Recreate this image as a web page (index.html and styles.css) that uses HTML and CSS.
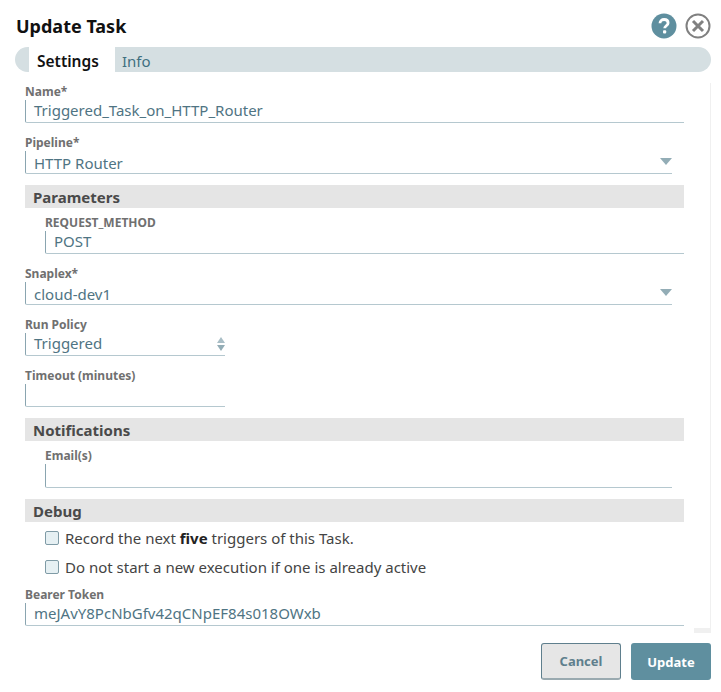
FILE: index.html
```html
<!DOCTYPE html>
<html lang="en">
<head>
  <meta charset="UTF-8" />
  <title>Update Task</title>
  <link rel="stylesheet" href="styles.css">
</head>
<body>
  <div class="dialog">
    <div class="header">
      <h1>Update Task</h1>
      <div class="header-icons">
        <svg class="icon" viewBox="0 0 26 26" width="26" height="26">
          <circle cx="13" cy="13" r="12.5" fill="#5f8f9f"/>
          <path d="M9 10.2c0-2.4 1.8-3.7 4.1-3.7s4 1.3 4 3.4c0 2.8-3.4 2.9-3.4 5.4" fill="none" stroke="#fff" stroke-width="2.8"/>
          <rect x="12" y="17.3" width="3.2" height="3.2" rx="1" fill="#fff"/>
        </svg>
        <svg class="icon" viewBox="0 0 26 26" width="26" height="26">
          <circle cx="13" cy="13" r="11.5" fill="#fff" stroke="#808080" stroke-width="2"/>
          <path d="M8 8l10 10M18 8L8 18" fill="none" stroke="#808080" stroke-width="3"/>
        </svg>
      </div>
    </div>

    <div class="tabs">
      <div class="tab active">Settings</div>
      <div class="tab">Info</div>
    </div>

    <div class="body">
      <div class="form">
        <div class="field name-field">
          <label>Name*</label>
          <div class="input">Triggered_Task_on_HTTP_Router</div>
        </div>
        <div class="field">
          <label>Pipeline*</label>
          <div class="input select">HTTP Router<span class="caret"></span></div>
        </div>

        <div class="section">Parameters</div>
        <div class="field indent">
          <label>REQUEST_METHOD</label>
          <div class="input">POST</div>
        </div>
        <div class="field">
          <label>Snaplex*</label>
          <div class="input select">cloud-dev1<span class="caret"></span></div>
        </div>
        <div class="field small">
          <label>Run Policy</label>
          <div class="input">Triggered
            <span class="spinner"><span class="up"></span><span class="down"></span></span>
          </div>
        </div>
        <div class="field small">
          <label>Timeout (minutes)</label>
          <div class="input"></div>
        </div>

        <div class="section">Notifications</div>
        <div class="field indent">
          <label>Email(s)</label>
          <div class="input tall"></div>
        </div>

        <div class="section">Debug</div>
        <div class="check first"><span class="box"></span>Record the next <b>five</b> triggers of this Task.</div>
        <div class="check"><span class="box"></span>Do not start a new execution if one is already active</div>
        <div class="field bearer-field">
          <label>Bearer Token</label>
          <div class="input">meJAvY8PcNbGfv42qCNpEF84s018OWxb</div>
        </div>
      </div>
      <div class="scroll-end"></div>
    </div>

    <div class="footer">
      <button class="btn cancel">Cancel</button>
      <button class="btn update">Update</button>
    </div>
  </div>
</body>
</html>
```

FILE: styles.css
```css
* {
  box-sizing: border-box;
  margin: 0;
  padding: 0;
  font-family: 'Noto Sans', 'Open Sans', sans-serif;
}

body {
  background-color: white;
  width: 721px;
  height: 692px;
  overflow: hidden;
}

.dialog {
  padding: 13px 10px 0 15px;
}

.header {
  display: flex;
  justify-content: space-between;
  align-items: center;
  height: 26px;
  padding-left: 1px;
}

h1 {
  font-size: 18px;
  font-weight: 700;
  color: #111;
}

.header-icons {
  display: flex;
  gap: 8px;
}

.tabs {
  display: flex;
  height: 25px;
  margin-top: 8px;
  padding-left: 14px;
  background-color: #d5dfe2;
  border-radius: 13px;
}

.tab {
  font-size: 15px;
  line-height: 28px;
  padding: 0 7px;
  color: #3f6f80;
}

.tab.active {
  width: 86px;
  padding: 0 8px;
  background-color: white;
  color: #111;
  font-size: 15.5px;
  font-weight: 600;
}

.body {
  position: relative;
  height: 550px;
  margin-top: 11px;
  padding-left: 10px;
  border-right: 1px solid #f0f0f0;
}

.form {
  width: 659px;
}

.field {
  margin-top: 11px;
}

.name-field {
  margin-top: 0;
}

label {
  display: block;
  font-size: 12px;
  line-height: 17px;
  font-weight: 700;
  color: #707070;
}

.input {
  position: relative;
  height: 23px;
  padding-left: 8px;
  font-size: 15px;
  line-height: 21px;
  color: #4f7483;
  border-left: 1px solid #8aa5b0;
  border-bottom: 1px solid #b5c8cf;
  border-bottom-left-radius: 2px;
}

.input.select {
  margin-right: 12px;
  line-height: 24px;
}

.input.tall {
  height: 24px;
  margin-right: 12px;
}

.caret {
  position: absolute;
  right: 0;
  top: 7px;
  border-left: 6px solid transparent;
  border-right: 6px solid transparent;
  border-top: 7px solid #93adb6;
}

.spinner {
  position: absolute;
  right: 0;
  top: 4px;
  display: flex;
  flex-direction: column;
  gap: 2px;
}

.up {
  border-left: 4px solid transparent;
  border-right: 4px solid transparent;
  border-bottom: 6px solid #a9bec6;
}

.down {
  border-left: 4px solid transparent;
  border-right: 4px solid transparent;
  border-top: 6px solid #93adb6;
}

.small {
  width: 200px;
}

.section {
  height: 23px;
  margin-top: 11px;
  padding-left: 8px;
  font-size: 15px;
  line-height: 25px;
  font-weight: 700;
  color: #4a4a4a;
  background-color: #e5e5e5;
}

.indent {
  margin-top: 6px;
  padding-left: 20px;
}

.check {
  display: flex;
  align-items: center;
  height: 20px;
  margin-top: 9px;
  padding-left: 20px;
  font-size: 15px;
  color: #444;
  white-space: pre;
}

.check.first {
  margin-top: 6px;
}

.check b {
  font-weight: 700;
  color: #222;
}

.box {
  width: 14px;
  height: 14px;
  margin-right: 6px;
  background-color: #e6f0f3;
  border: 1px solid #7f9ba6;
  border-radius: 2px;
}

.bearer-field {
  margin-top: 9px;
}

.scroll-end {
  position: absolute;
  right: -1px;
  bottom: 0;
  width: 17px;
  height: 5px;
  background-color: #f0f0f0;
}

.footer {
  display: flex;
  justify-content: flex-end;
  gap: 10px;
  margin-top: 10px;
}

.btn {
  width: 80px;
  height: 37px;
  font-size: 13px;
  font-weight: 700;
  border-radius: 3px;
}

.cancel {
  color: #5f7f8d;
  background-color: #e6e6e6;
  border: 1px solid #5f7f8d;
  border-bottom: 2px solid #9aaab0;
}

.update {
  color: white;
  background-color: #5f8f9f;
  border: none;
}
```
